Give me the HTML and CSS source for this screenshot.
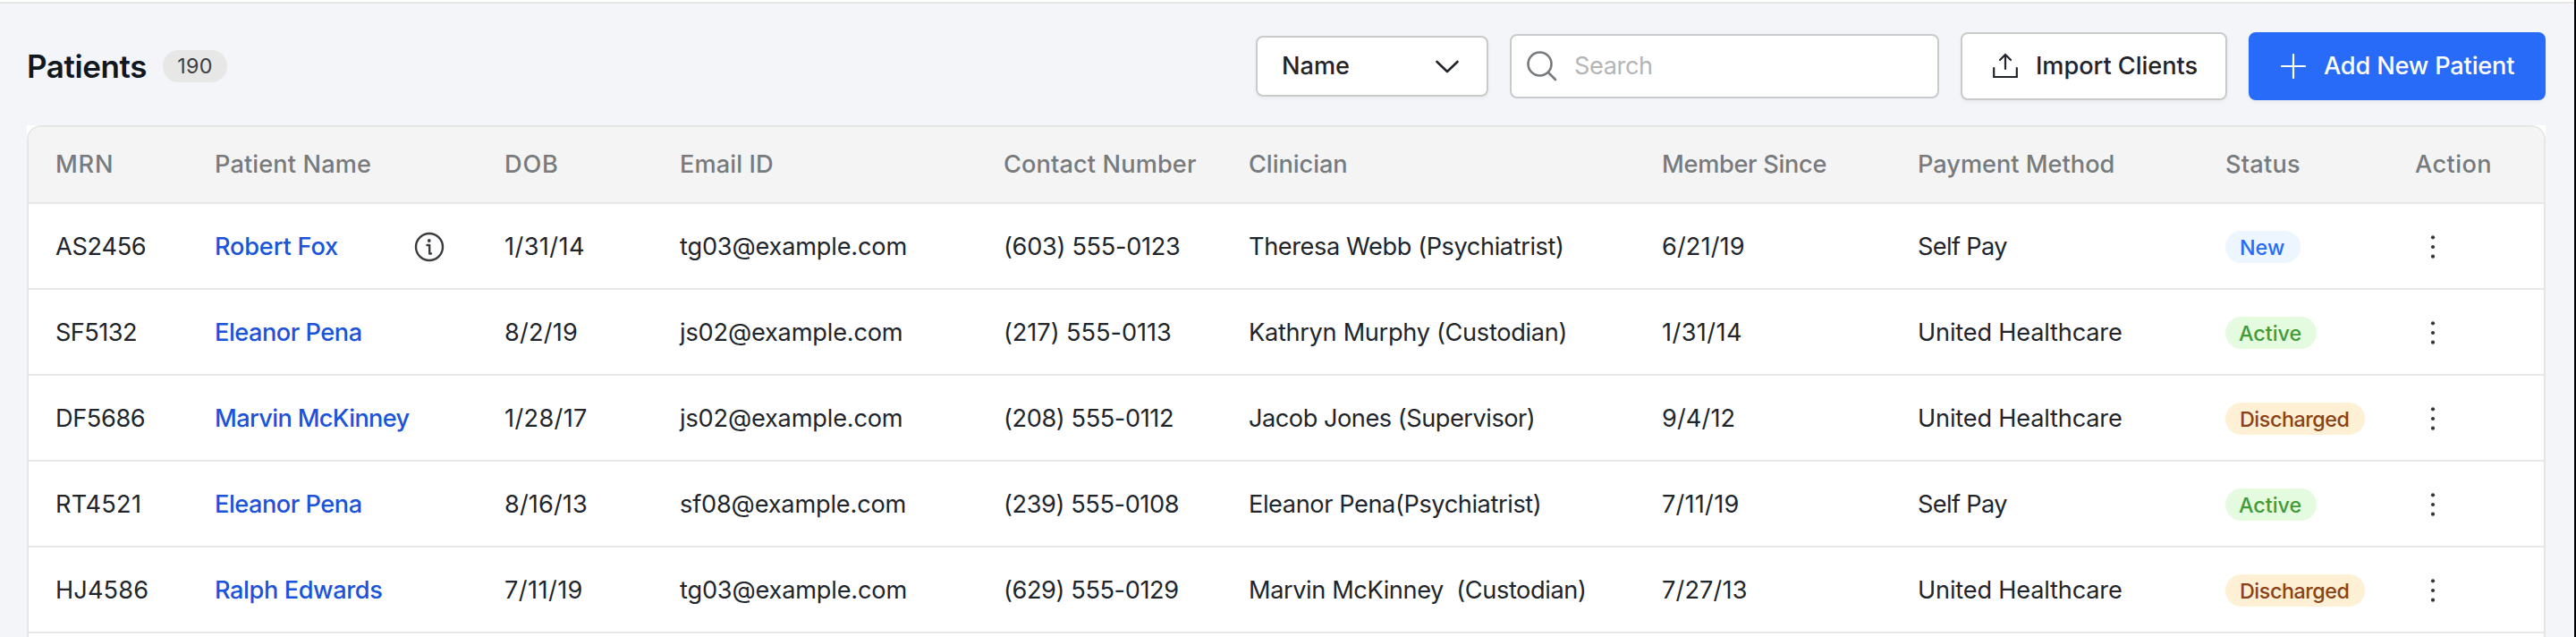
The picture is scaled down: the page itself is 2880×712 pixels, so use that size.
FILE: index.html
```html
<!DOCTYPE html>
<html lang="en">
<head>
<meta charset="utf-8">
<title>Patients</title>
<link rel="stylesheet" href="styles.css">
</head>
<body>
<main class="page">
  <header class="toolbar">
    <h1 class="title">Patients</h1>
    <span class="count">190</span>
    <div class="controls">
      <button class="select"><span>Name</span>
        <svg class="chevron" width="28" height="16" viewBox="0 0 28 16"><path d="M2.5 3 14 14 25.500 3"/></svg>
      </button>
      <div class="search">
        <svg class="glass" width="36" height="36" viewBox="0 0 36 36"><circle cx="15.5" cy="15.5" r="13"/><path d="M25 25l8 8"/></svg>
        <span class="tn4">Search</span>
      </div>
      <button class="btn btn-light">
        <svg class="upload" width="30" height="30" viewBox="0 0 30 30"><path d="M2.200 17v10h25.600v-10M15 18V2M9 8l6-6 6 6"/></svg>
        <span class="tn1">Import Clients</span>
      </button>
      <button class="btn btn-primary">
        <svg class="plus" width="28" height="28" viewBox="0 0 28 28"><path d="M14 1v26M1 14h26"/></svg>
        <span class="tn2">Add New Patient</span>
      </button>
    </div>
  </header>
  <div class="card">
  <section class="table">
    <div class="row head">
      <span class="tp8">MRN</span><span class="tp1">Patient Name</span><span class="tp8">DOB</span><span class="tp1">Email ID</span><span class="tp1">Contact Number</span><span class="tn1">Clinician</span><span class="tn3">Member Since</span><span>Payment Method</span><span class="tp2">Status</span><span class="tp4">Action</span>
    </div>
    <div class="row">
      <span class="tn3">AS2456</span>
      <span class="name"><a class="tn2">Robert Fox</a><svg class="info" width="36" height="36" viewBox="0 0 36 36"><circle cx="18" cy="18" r="15"/><path d="M15.5 16h2.7v9.5M18.2 25.5h1.8"/><circle class="dot" cx="17.8" cy="11" r="1.9"/></svg></span>
      <span class="tp4">1/31/14</span><span class="tn2">tg03@example.com</span><span class="tn3">(603) 555-0123</span><span class="tn4">Theresa Webb (Psychiatrist)</span><span class="tp1">6/21/19</span><span class="tn7">Self Pay</span>
      <span><b class="pill new">New</b></span>
      <svg class="dots" width="8" height="28" viewBox="0 0 8 28"><circle cx="4" cy="3.3" r="2.1"/><circle cx="4" cy="14" r="2.1"/><circle cx="4" cy="24.7" r="2.1"/></svg>
    </div>
    <div class="row">
      <span class="tn6">SF5132</span>
      <span class="name"><a class="tn5">Eleanor Pena</a></span>
      <span class="tp2">8/2/19</span><span class="tn2">js02@example.com</span><span class="tn1">(217) 555-0113</span><span class="tn3">Kathryn Murphy (Custodian)</span><span class="tp4">1/31/14</span><span class="tn2">United Healthcare</span>
      <span><b class="pill active">Active</b></span>
      <svg class="dots" width="8" height="28" viewBox="0 0 8 28"><circle cx="4" cy="3.3" r="2.1"/><circle cx="4" cy="14" r="2.1"/><circle cx="4" cy="24.7" r="2.1"/></svg>
    </div>
    <div class="row">
      <span class="tn4">DF5686</span>
      <span class="name"><a class="tn7">Marvin McKinney</a></span>
      <span class="tp3">1/28/17</span><span class="tn2">js02@example.com</span><span class="tn4">(208) 555-0112</span><span class="tn5">Jacob Jones (Supervisor)</span><span class="tp1">9/4/12</span><span class="tn2">United Healthcare</span>
      <span><b class="pill discharged">Discharged</b></span>
      <svg class="dots" width="8" height="28" viewBox="0 0 8 28"><circle cx="4" cy="3.3" r="2.1"/><circle cx="4" cy="14" r="2.1"/><circle cx="4" cy="24.7" r="2.1"/></svg>
    </div>
    <div class="row">
      <span class="tp2">RT4521</span>
      <span class="name"><a class="tn5">Eleanor Pena</a></span>
      <span class="tp1">8/16/13</span><span class="tn2">sf08@example.com</span><span class="tn4">(239) 555-0108</span><span class="tn4">Eleanor Pena(Psychiatrist)</span><span class="tp2">7/11/19</span><span class="tn7">Self Pay</span>
      <span><b class="pill active">Active</b></span>
      <svg class="dots" width="8" height="28" viewBox="0 0 8 28"><circle cx="4" cy="3.3" r="2.1"/><circle cx="4" cy="14" r="2.1"/><circle cx="4" cy="24.7" r="2.1"/></svg>
    </div>
    <div class="row">
      <span class="tp1">HJ4586</span>
      <span class="name"><a class="tn4">Ralph Edwards</a></span>
      <span class="tp4">7/11/19</span><span class="tn2">tg03@example.com</span><span class="tn4">(629) 555-0129</span><span class="tn4">Marvin McKinney&nbsp; (Custodian)</span><span class="tp1">7/27/13</span><span class="tn2">United Healthcare</span>
      <span><b class="pill discharged">Discharged</b></span>
      <svg class="dots" width="8" height="28" viewBox="0 0 8 28"><circle cx="4" cy="3.3" r="2.1"/><circle cx="4" cy="14" r="2.1"/><circle cx="4" cy="24.7" r="2.1"/></svg>
    </div>
  </section>
  </div>
</main>
</body>
</html>
```
FILE: styles.css
```css
* { box-sizing: border-box; }
html { background: #fff; }
body {
  margin: 0;
  height: 712px;
  overflow: hidden;
  padding-top: 2px;
  border-right: 2px solid #000;
  font-family: Inter, "Liberation Sans", sans-serif;
  font-size: 27.16px;
  line-height: 1.2;
  color: #21252b;
}
.page {
  height: 710px;
  border-top: 2px solid #e6e6e6;
  background: #f4f5f8;
  padding: 0 32px 0 30px;
}
.toolbar { display: flex; align-items: center; height: 136px; padding-top: 4px; }
.title { margin: 0; font-size: 35px; font-weight: 600; letter-spacing: -.4px; color: #0f1720; }
.count {
  margin-left: 18px;
  width: 72px;
  height: 36px;
  border-radius: 18px;
  background: #e7e7e7;
  color: #3c4043;
  font-size: 23.3px;
  line-height: 35px;
  letter-spacing: .3px;
  text-align: center;
}
.controls { display: flex; align-items: center; gap: 24px; margin-left: auto; }
.select, .search, .btn {
  display: flex;
  align-items: center;
  border: 2px solid #c9cacc;
  border-radius: 8px;
  background: #fff;
  padding: 0;
  font: inherit;
  color: inherit;
}
.select, .btn { font-weight: 480; box-shadow: 0 2px 4px rgba(20, 30, 50, .05); }
.select span, .btn span { padding-top: 1px; }
.select { width: 260px; height: 68px; justify-content: space-between; padding: 0 30px 0 27px; }
.search { width: 480px; height: 72px; padding-left: 16px; gap: 18px; color: #b4b5b6; }
.btn { height: 76px; }
.btn-light { width: 298px; padding-left: 33px; gap: 19px; }
.btn-primary { width: 332px; padding-left: 34px; gap: 20px; background: #276bf8; border-color: #276bf8; color: #fff; }
svg { fill: none; stroke: currentColor; stroke-width: 2.2; stroke-linecap: round; stroke-linejoin: round; flex: none; }
.chevron { stroke-width: 2.6; }
.glass { stroke: #777b7d; stroke-width: 2.6; }
.upload { stroke-linejoin: miter; }

.card { background: #fff; height: 572px; }
.table { height: 572px; border: 2px solid #e6e6e6; border-bottom: 0; border-radius: 16px 16px 0 0; overflow: hidden; }
.row {
  display: grid;
  grid-template-columns: 178px 324px 196px 362px 274px 462px 286px 344px 212px 1fr;
  align-items: center;
  height: 96px;
  padding: 2px 0 0 30px;
  border-bottom: 2px solid #e7e7e7;
  white-space: nowrap;
}
.head { height: 86px; padding-top: 0; background: #f4f4f4; color: #777b7d; font-weight: 500; }
.name { display: flex; align-items: center; justify-content: space-between; padding-right: 66px; color: #1b53da; font-weight: 470; }
.info { color: #3a3d40; stroke-width: 2.4; }
.info .dot { fill: currentColor; stroke: none; }
.pill { display: block; width: max-content; height: 36px; border-radius: 18px; padding: 0 16px; font-size: 23.3px; line-height: 37px; font-weight: 470; }
.new { width: 84px; background: #edf5fe; color: #276bf8; }
.active { width: 102px; padding-left: 15px; background: #e5fbdf; color: #3f9a37; }
.discharged { width: 156px; letter-spacing: -.45px; background: #fdf0d5; color: #8c4214; }
.dots { margin-left: 16px; fill: #333639; stroke: none; }

/* letter-spacing steps, roughly tenths of a pixel */
.tn1 { letter-spacing: -.05px; }
.tn2 { letter-spacing: -.18px; }
.tn3 { letter-spacing: -.3px; }
.tn4 { letter-spacing: -.4px; }
.tn5 { letter-spacing: -.47px; }
.tn6 { letter-spacing: -.56px; }
.tn7 { letter-spacing: -.64px; }
.tp1 { letter-spacing: .12px; }
.tp2 { letter-spacing: .22px; }
.tp3 { letter-spacing: .33px; }
.tp4 { letter-spacing: .42px; }
.tp8 { letter-spacing: .8px; }
```
